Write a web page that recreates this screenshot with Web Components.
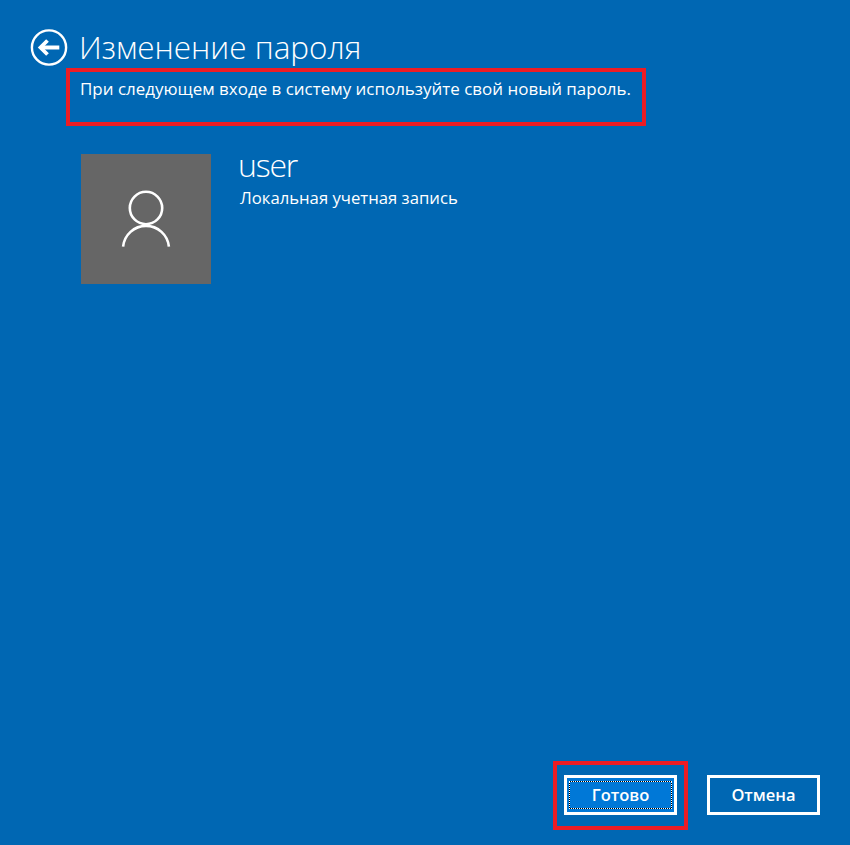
<!DOCTYPE html>
<html lang="ru"><head><meta charset="utf-8">
<style>
html,body{margin:0;padding:0;height:100%;background:#0067b3;overflow:hidden}
body{font-family:"Open Sans","Noto Sans","Liberation Sans",sans-serif;color:#fff}
</style></head><body>
<pw-page>
  <pw-header slot="header" title="Изменение пароля"></pw-header>
  <pw-note>При следующем входе в систему используйте свой новый пароль.</pw-note>
  <pw-account name="user" kind="Локальная учетная запись"></pw-account>
  <pw-button slot="act" primary>Готово</pw-button>
  <pw-button slot="act">Отмена</pw-button>
</pw-page>
<script>
function def(name, html){
  customElements.define(name, class extends HTMLElement{
    constructor(){super();this.attachShadow({mode:'open'});}
    connectedCallback(){ this.shadowRoot.innerHTML=typeof html==='function'?html(this):html; }
  });
}
def('pw-page',`<style>
:host{display:flex;flex-direction:column;width:850px;height:845px;box-sizing:border-box;padding:29px 30px 30px 30px;overflow:hidden}
.content{flex:1;display:flex;flex-direction:column}
.actions{display:flex;justify-content:flex-end;gap:30px}
</style>
<div class="content"><slot name="header"></slot><slot></slot></div>
<div class="actions"><slot name="act"></slot></div>`);
def('pw-header',h=>`<style>
:host{display:flex;align-items:flex-start;gap:11px;height:39px;flex:none}
svg{display:block;width:38px;height:37px;flex:none}
h1{margin:-2px 0 0;font:300 31.5px/39px "Open Sans","Noto Sans",sans-serif;white-space:nowrap}
</style>
<svg viewBox="0 0 38 37" fill="none" stroke="#fff"><circle cx="19" cy="18.5" r="17.1" stroke-width="2.4"/><path d="M29.3 18.5H12" stroke-width="4"/><path d="M17.5 11.5L10.5 18.5L17.5 25.5" stroke-width="3.8"/></svg>
<h1>${h.getAttribute('title')||''}</h1>`);
def('pw-note',`<style>
:host{display:block;position:relative;margin:11px 0 0 50px;font:400 16.97px/20px "Open Sans","Noto Sans",sans-serif;white-space:nowrap;height:75px}
.mark{position:absolute;left:-14px;top:-11px;width:580px;height:58px;box-sizing:border-box;border:4px solid #ed1c24}
</style><slot></slot><span class="mark"></span>`);
def('pw-account',h=>`<style>
:host{display:flex;margin-left:51px;gap:28px;flex:none}
.pic{width:130px;height:130px;background:#666}
svg{width:130px;height:130px;display:block}
.n{font:300 32px/30px "Open Sans","Noto Sans",sans-serif;letter-spacing:-1.2px;margin:-4px 0 0 -1px}
.k{font:400 16.7px/20px "Open Sans","Noto Sans",sans-serif;margin-top:8px;white-space:nowrap;margin-left:1px}
</style>
<div class="pic"><svg viewBox="0 0 130 130" fill="none" stroke="#fff" stroke-width="2.6"><circle cx="65" cy="54" r="16.2"/><path d="M42.1 92.7A23 23 0 0 1 87.9 92.7"/></svg></div>
<div><div class="n">${h.getAttribute('name')}</div><div class="k">${h.getAttribute('kind')}</div></div>`);
def('pw-button',h=>`<style>
:host{display:block;position:relative;width:113px;height:40px;flex:none}
.b{box-sizing:border-box;width:100%;height:100%;border:3px solid #fff;display:flex;align-items:center;justify-content:center;font:600 16.5px/20px "Open Sans","Noto Sans",sans-serif;color:#fff;background:${h.hasAttribute('primary')?'#0078d7':'transparent'}}
.f,.g{position:absolute;inset:6px 5px}
.f{border:1px solid #000}
.g{border:1px dotted #fff}
.mark{position:absolute;left:-11px;top:-14px;width:135px;height:69px;box-sizing:border-box;border:4px solid #ed1c24}
</style><div class="b"><slot></slot></div>${h.hasAttribute('primary')?'<span class="f"></span><span class="g"></span><span class="mark"></span>':''}`);
</script>
</body></html>
